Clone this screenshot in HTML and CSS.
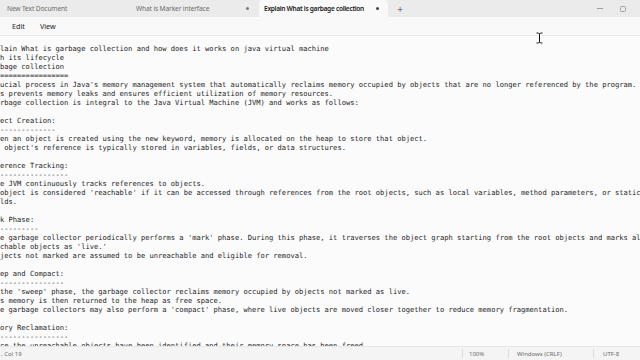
FILE: index.html
```
<!DOCTYPE html>
<html>
<head>
<meta charset="utf-8">
<link rel="stylesheet" href="styles.css">
</head>
<body>
<div class="window">
  <div class="tabbar">
    <div class="tab"><span class="tab-title">New Text Document</span></div>
    <div class="tab"><span class="tab-title">What is Marker interface</span><span class="dot"></span></div>
    <div class="tab active"><span class="tab-title">Explain What is garbage collection</span><span class="dot"></span></div>
    <div class="newtab">+</div>
    <div class="spacer"></div>
    <div class="controls">
      <div class="winctl"><span class="min"></span></div>
      <div class="winctl"><span class="max"></span></div>
    </div>
  </div>
  <div class="menubar">
    <span class="menu-item">Edit</span>
    <span class="menu-item">View</span>
  </div>
  <div class="editor">
<pre class="text">lain What is garbage collection and how does it works on java virtual machine
h its lifecycle
bage collection
================
ucial process in Java's memory management system that automatically reclaims memory occupied by objects that are no longer referenced by the program.
s prevents memory leaks and ensures efficient utilization of memory resources.
rbage collection is integral to the Java Virtual Machine (JVM) and works as follows:

ect Creation:
-------------
en an object is created using the new keyword, memory is allocated on the heap to store that object.
 object's reference is typically stored in variables, fields, or data structures.

erence Tracking:
----------------
e JVM continuously tracks references to objects.
object is considered 'reachable' if it can be accessed through references from the root objects, such as local variables, method parameters, or static
lds.

k Phase:
---------
e garbage collector periodically performs a 'mark' phase. During this phase, it traverses the object graph starting from the root objects and marks all
chable objects as 'live.'
jects not marked are assumed to be unreachable and eligible for removal.

ep and Compact:
---------------
the 'sweep' phase, the garbage collector reclaims memory occupied by objects not marked as live.
s memory is then returned to the heap as free space.
e garbage collectors may also perform a 'compact' phase, where live objects are moved closer together to reduce memory fragmentation.

ory Reclamation:
----------------
ce the unreachable objects have been identified and their memory space has been freed,</pre>
  </div>
  <div class="statusbar">
    <span class="status-pos">, Col 19</span>
    <span class="status-item zoom">100%</span>
    <span class="status-item eol">Windows (CRLF)</span>
    <span class="status-item enc">UTF-8</span>
  </div>
  <svg class="ibeam" width="9" height="12" viewBox="0 0 9 12">
    <path d="M1.5 1 H3.5 L4.5 2 L5.5 1 H7.5 M4.5 2 V10 M1.5 11 H3.5 L4.5 10 L5.5 11 H7.5" fill="none" stroke="#fff" stroke-width="2.6" stroke-linecap="round"/>
    <path d="M1.5 1 H3.5 L4.5 2 L5.5 1 H7.5 M4.5 2 V10 M1.5 11 H3.5 L4.5 10 L5.5 11 H7.5" fill="none" stroke="#111" stroke-width="1"/>
  </svg>
</div>
</body>
</html>
```

FILE: styles.css
```
* { box-sizing: border-box; }
html, body {
  margin: 0;
  padding: 0;
  width: 640px;
  height: 360px;
  overflow: hidden;
  background: #fbfbfb;
}
.window {
  position: relative;
  width: 640px;
  height: 360px;
  display: flex;
  flex-direction: column;
  font-family: "Noto Sans", "Open Sans", sans-serif;
}
.tabbar {
  height: 17px;
  flex: none;
  display: flex;
  align-items: stretch;
  background: #ebebeb;
}
.tab {
  width: 129px;
  flex: none;
  display: flex;
  align-items: center;
  justify-content: space-between;
  padding: 0 9px 0 7px;
  font-size: 6.6px;
  letter-spacing: -0.12px;
  color: #6b6b6b;
  white-space: nowrap;
  overflow: hidden;
}
.tab.active {
  background: #f9f9f9;
  color: #1a1a1a;
  font-weight: 600;
  letter-spacing: -0.3px;
  border-radius: 4px 4px 0 0;
  padding: 0 9px 0 5px;
  margin-left: 1px;
}
.dot {
  width: 3px;
  height: 3px;
  flex: none;
  border-radius: 50%;
  background: #7a7a7a;
}
.tab.active .dot { background: #444; }
.newtab {
  width: 24px;
  display: flex;
  align-items: center;
  justify-content: center;
  font-size: 10px;
  color: #333;
  font-weight: 300;
}
.spacer { flex: 1; }
.controls {
  display: flex;
  align-items: stretch;
  gap: 1px;
  margin-right: 6px;
}
.winctl {
  width: 22px;
  display: flex;
  align-items: center;
  justify-content: center;
}
.min {
  width: 6px;
  height: 1px;
  background: #a0a0a0;
}
.max {
  width: 6px;
  height: 6px;
  border: 1px solid #a0a0a0;
  border-radius: 1.5px;
}
.menubar {
  height: 19px;
  flex: none;
  display: flex;
  align-items: center;
  gap: 15px;
  padding-left: 12px;
  background: #f9f9f9;
  border-bottom: 1px solid #ebebeb;
  font-size: 7.2px;
  color: #1a1a1a;
}
.editor {
  flex: 1;
  overflow: hidden;
  background: #fbfbfb;
  padding-top: 8px;
}
.text {
  margin: 0;
  font-family: "DejaVu Sans Mono", "Liberation Mono", monospace;
  font-size: 7.1px;
  line-height: 9px;
  color: #1c1c1c;
  white-space: pre;
}
.statusbar {
  height: 14px;
  flex: none;
  display: flex;
  align-items: center;
  background: #f4f4f4;
  border-top: 1px solid #e6e6e6;
  font-size: 6px;
  color: #6a6a6a;
}
.status-pos {
  flex: 1;
  padding-left: 1px;
}
.status-item {
  height: 9px;
  display: flex;
  align-items: center;
  border-left: 1px solid #dcdcdc;
}
.zoom { width: 46px; padding-left: 6px; }
.eol { width: 85px; padding-left: 8px; }
.enc { width: 47px; padding-left: 9px; }
.ibeam {
  position: absolute;
  left: 535px;
  top: 32px;
}
```
